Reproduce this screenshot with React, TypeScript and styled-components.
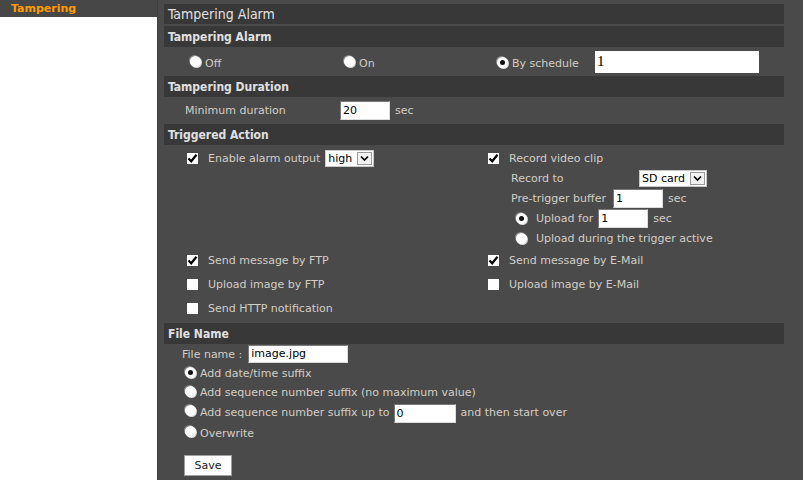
import styled, { createGlobalStyle } from 'styled-components';

const GlobalStyle = createGlobalStyle`
  html, body {
    margin: 0;
    padding: 0;
    background: #ffffff;
  }
  body {
    font-family: "DejaVu Sans", Verdana, sans-serif;
    font-size: 11px;
  }
`;

const Page = styled.div`
  display: flex;
  width: 803px;
  height: 480px;
  overflow: hidden;
`;

const Sidebar = styled.div`
  width: 157px;
  flex-shrink: 0;
  background: #ffffff;
`;

const SideItem = styled.div`
  height: 17px;
  line-height: 17px;
  padding-left: 11px;
  background: #474747;
  color: #ff9c00;
  font-weight: bold;
  font-size: 11px;
`;

const Main = styled.div`
  flex: 1;
  background: #4a4a4a;
  border-left: 1px solid #3e3e3e;
  padding: 4px 19px 0 6px;
`;

const TitleBar = styled.div`
  height: 20px;
  line-height: 20px;
  padding-left: 4px;
  background: #383838;
  color: #e2e2e2;
  font-family: "DejaVu Sans Condensed", "DejaVu Sans", sans-serif;
  font-stretch: condensed;
  font-size: 14px;
  margin-bottom: 2px;
`;

const SectionBar = styled.div`
  height: 21px;
  line-height: 22px;
  padding-left: 4px;
  background: #383838;
  color: #e0e0e0;
  font-family: "DejaVu Sans Condensed", "DejaVu Sans", sans-serif;
  font-stretch: condensed;
  font-size: 12px;
  font-weight: bold;
`;

const Label = styled.span`
  color: #d2cec6;
  white-space: nowrap;
`;

const RadioRow = styled.div`
  height: 29px;
  box-sizing: border-box;
  padding-top: 4px;
  display: grid;
  grid-template-columns: 154px 153px 98px 164px;
  align-items: center;
  padding-left: 26px;
`;

const Option = styled.label<{ lift?: number }>`
  display: flex;
  align-items: center;
  gap: 4px;
  color: #d2cec6;
  white-space: nowrap;

  & > span:first-child {
    margin-top: ${({ lift }) => -(lift ?? 0)}px;
  }
`;

const RadioDot = styled.span<{ on?: boolean }>`
  width: 11px;
  height: 11px;
  border-radius: 50%;
  background: #ffffff;
  box-shadow: -1px -1px 0 #8a8a8a, 1px 1px 0 #d8d8d8;
  display: inline-flex;
  align-items: center;
  justify-content: center;
  flex-shrink: 0;

  &::after {
    content: '';
    width: 5px;
    height: 5px;
    border-radius: 50%;
    background: ${({ on }) => (on ? '#111' : 'transparent')};
  }
`;

const Box = styled.span`
  width: 11px;
  height: 11px;
  background: #ffffff;
  display: inline-flex;
  align-items: center;
  justify-content: center;
  flex-shrink: 0;
`;

const TextInput = styled.div<{ w: number; serif?: boolean; h?: number }>`
  width: ${({ w }) => w}px;
  height: ${({ h }) => h ?? 19}px;
  box-sizing: border-box;
  background: #ffffff;
  color: #000;
  font-family: ${({ serif }) => (serif ? '"Liberation Serif", serif' : '"DejaVu Sans", sans-serif')};
  font-size: ${({ serif }) => (serif ? 15 : 11)}px;
  line-height: ${({ h }) => (h ?? 19) - 2}px;
  padding-left: 2px;
  border: ${({ serif }) => (serif ? 'none' : '1px solid')};
  border-color: #7a7a7a #dcdcdc #dcdcdc #7a7a7a;
`;

const SelectBox = styled.div<{ w: number; shift?: number }>`
  width: ${({ w }) => w}px;
  height: 17px;
  margin-left: ${({ shift }) => shift ?? 0}px;
  box-sizing: border-box;
  background: #ffffff;
  border: 1px solid #c8c8c8;
  display: flex;
  align-items: center;
  justify-content: space-between;
  color: #000;
  font-size: 11px;
  padding-left: 2px;
`;

const Arrow = styled.span`
  width: 15px;
  height: 13px;
  margin-right: 1px;
  box-sizing: border-box;
  border: 1px solid #9a9a9a;
  background: #f2f2f2;
  display: flex;
  align-items: center;
  justify-content: center;
`;

const FieldRow = styled.div<{ h: number; pad: number; labelW?: number }>`
  height: ${({ h }) => h}px;
  display: flex;
  align-items: center;
  padding-left: ${({ pad }) => pad}px;

  & > ${Label}:first-child {
    width: ${({ labelW }) => (labelW ? `${labelW}px` : 'auto')};
  }
`;

const Unit = styled(Label)`
  margin-left: 5px;
`;

const ActionGrid = styled.div`
  display: grid;
  grid-template-columns: 301px 1fr;
  padding: 3px 0 3px 23px;
`;

const Stack = styled.div`
  display: flex;
  flex-direction: column;
`;

const Check = styled.label<{ h: number }>`
  height: ${({ h }) => h}px;
  display: flex;
  align-items: center;
  gap: 10px;
  color: #d2cec6;
  white-space: nowrap;
`;

const SubRow = styled.div<{ pad: number }>`
  height: 20px;
  display: flex;
  align-items: center;
  padding-left: ${({ pad }) => pad}px;
`;

const FileBody = styled.div`
  padding: 0 0 0 18px;
`;

const FileRadio = styled.label<{ h: number }>`
  height: ${({ h }) => h}px;
  display: flex;
  align-items: center;
  gap: 4px;
  padding-left: 3px;
  color: #d2cec6;
  white-space: nowrap;

  & > span:first-child {
    margin-top: -3px;
  }
`;

const SaveButton = styled.button`
  margin: 11px 0 0 2px;
  width: 48px;
  height: 21px;
  background: #ffffff;
  border: 1px solid #a0a0a0;
  font-family: "DejaVu Sans", sans-serif;
  font-size: 11px;
  color: #222;
  padding: 0;
`;

function Tick() {
  return (
    <svg width="11" height="11" viewBox="0 0 11 11">
      <path d="M1.5 5.5 L4.2 8.3 L9.5 1.8" fill="none" stroke="#000" strokeWidth="2.2" />
    </svg>
  );
}

function CheckItem({ label, on, h }: { label: string; on?: boolean; h: number }) {
  return (
    <Check h={h}>
      <Box>{on && <Tick />}</Box>
      {label}
    </Check>
  );
}

function Select({ value, w, shift }: { value: string; w: number; shift?: number }) {
  return (
    <SelectBox w={w} shift={shift}>
      <span>{value}</span>
      <Arrow>
        <svg width="9" height="7" viewBox="0 0 9 7">
          <path d="M1 1.5 L4.5 5 L8 1.5" fill="none" stroke="#000" strokeWidth="1.6" />
        </svg>
      </Arrow>
    </SelectBox>
  );
}

export default function App() {
  return (
    <>
      <GlobalStyle />
      <Page>
        <Sidebar>
          <SideItem>Tampering</SideItem>
        </Sidebar>
        <Main>
          <TitleBar>Tampering Alarm</TitleBar>
          <SectionBar>Tampering Alarm</SectionBar>
          <RadioRow>
            <Option lift={5}>
              <RadioDot />
              Off
            </Option>
            <Option lift={5}>
              <RadioDot />
              On
            </Option>
            <Option lift={3}>
              <RadioDot on />
              By schedule
            </Option>
            <TextInput w={164} h={22} serif style={{ marginTop: -3 }}>
              1
            </TextInput>
          </RadioRow>

          <SectionBar>Tampering Duration</SectionBar>
          <FieldRow h={27} pad={21} labelW={155}>
            <Label>Minimum duration</Label>
            <TextInput w={50}>20</TextInput>
            <Unit>sec</Unit>
          </FieldRow>

          <SectionBar>Triggered Action</SectionBar>
          <ActionGrid>
            <Stack>
              <Check h={20}>
                <Box>
                  <Tick />
                </Box>
                Enable alarm output
                <Select value="high" w={49} shift={-5} />
              </Check>
            </Stack>
            <Stack>
              <CheckItem label="Record video clip" on h={20} />
              <SubRow pad={23}>
                <Label style={{ width: 128 }}>Record to</Label>
                <Select value="SD card" w={68} />
              </SubRow>
              <SubRow pad={23}>
                <Label style={{ marginRight: 7 }}>Pre-trigger buffer</Label>
                <TextInput w={50}>1</TextInput>
                <Unit>sec</Unit>
              </SubRow>
              <SubRow pad={28}>
                <Option>
                  <RadioDot on />
                  <Label style={{ marginLeft: 5, marginRight: 5 }}>Upload for</Label>
                </Option>
                <TextInput w={50}>1</TextInput>
                <Unit>sec</Unit>
              </SubRow>
              <SubRow pad={28}>
                <Option>
                  <RadioDot />
                  <Label style={{ marginLeft: 5 }}>Upload during the trigger active</Label>
                </Option>
              </SubRow>
            </Stack>
            <CheckItem label="Send message by FTP" on h={24} />
            <CheckItem label="Send message by E-Mail" on h={24} />
            <CheckItem label="Upload image by FTP" h={24} />
            <CheckItem label="Upload image by E-Mail" h={24} />
            <CheckItem label="Send HTTP notification" h={24} />
          </ActionGrid>

          <SectionBar>File Name</SectionBar>
          <FileBody>
            <FieldRow h={20} pad={0}>
              <Label style={{ marginRight: 6 }}>File name :</Label>
              <TextInput w={100} h={18}>
                image.jpg
              </TextInput>
            </FieldRow>
            <FileRadio h={19}>
              <RadioDot on />
              Add date/time suffix
            </FileRadio>
            <FileRadio h={19}>
              <RadioDot />
              Add sequence number suffix (no maximum value)
            </FileRadio>
            <FileRadio h={20}>
              <RadioDot />
              Add sequence number suffix up to
              <TextInput w={62} style={{ marginTop: 2 }}>
                0
              </TextInput>
              <Label style={{ marginLeft: 1 }}>and then start over</Label>
            </FileRadio>
            <FileRadio h={22}>
              <RadioDot />
              Overwrite
            </FileRadio>
            <SaveButton>Save</SaveButton>
          </FileBody>
        </Main>
      </Page>
    </>
  );
}
